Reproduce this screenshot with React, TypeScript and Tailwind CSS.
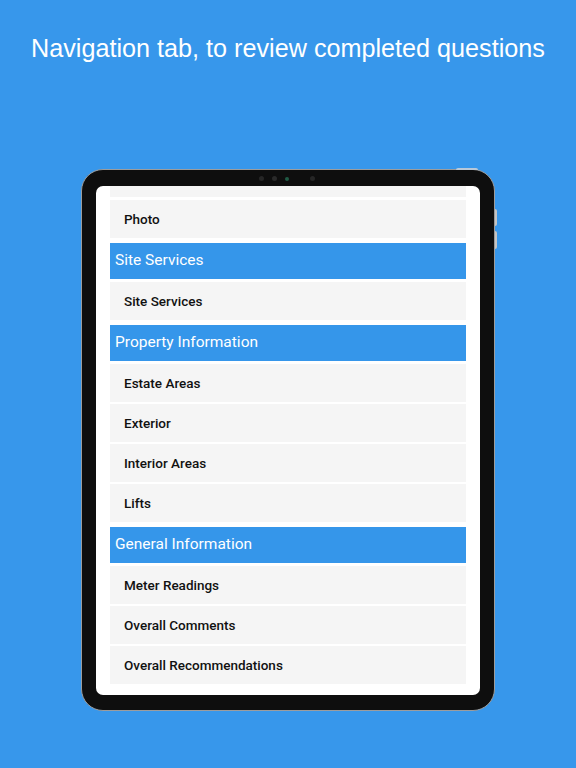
import React from 'react';

type Item = { kind: 'row' | 'header'; label: string };

const items: Item[] = [
  { kind: 'row', label: 'Photo' },
  { kind: 'header', label: 'Site Services' },
  { kind: 'row', label: 'Site Services' },
  { kind: 'header', label: 'Property Information' },
  { kind: 'row', label: 'Estate Areas' },
  { kind: 'row', label: 'Exterior' },
  { kind: 'row', label: 'Interior Areas' },
  { kind: 'row', label: 'Lifts' },
  { kind: 'header', label: 'General Information' },
  { kind: 'row', label: 'Meter Readings' },
  { kind: 'row', label: 'Overall Comments' },
  { kind: 'row', label: 'Overall Recommendations' },
];

function gapClass(prev: Item | undefined, cur: Item) {
  if (!prev) return 'mt-[3px]';
  if (cur.kind === 'header') return 'mt-[5px]';
  if (prev.kind === 'header') return 'mt-[3px]';
  return 'mt-[2px]';
}

export default function App() {
  return (
    <div className="w-[576px] h-[768px] bg-[#3797eb] flex flex-col items-center overflow-hidden">
      <h1 className="pt-[33px] text-[25.2px] leading-[30px] text-white font-['Liberation_Sans',Arial,sans-serif] text-center">
        Navigation tab, to review completed questions
      </h1>

      {/* tablet */}
      <div className="relative mt-[106px] w-[414px] h-[542px] rounded-[22px] bg-[#0e0e0e] border border-[#9c9c9c] pt-[16px] pb-[15px] px-[14px]">
        {/* hardware buttons */}
        <div className="absolute right-[-3px] top-[39px] flex flex-col gap-[5px]">
          <div className="w-[2px] h-[17px] rounded-r bg-[#c4c4c4]" />
          <div className="w-[2px] h-[18px] rounded-r bg-[#c4c4c4]" />
        </div>
        <div className="absolute top-[-2px] left-[374px] w-[22px] h-[2px] rounded-t bg-[#b8c8d8]" />

        {/* camera */}
        <div className="absolute top-[6px] left-[177px] flex items-center gap-[8px]">
          <div className="w-[5px] h-[5px] rounded-full bg-[#262626]" />
          <div className="w-[5px] h-[5px] rounded-full bg-[#2a2a2a]" />
          <div className="w-[4px] h-[4px] rounded-full bg-[#1f5a45]" />
          <div className="ml-[13px] w-[5px] h-[5px] rounded-full bg-[#262626]" />
        </div>

        {/* screen */}
        <div className="w-full h-full bg-white rounded-[7px] overflow-hidden px-[14px] flex flex-col font-['Roboto',sans-serif]">
          <div className="h-[11px] shrink-0 bg-[#f5f5f5]" />
          {items.map((it, i) =>
            it.kind === 'header' ? (
              <div
                key={i}
                className={`${gapClass(items[i - 1], it)} h-[36px] shrink-0 bg-[#3596ea] flex items-center pl-[5px] text-white text-[15.5px]`}
              >
                {it.label}
              </div>
            ) : (
              <div
                key={i}
                className={`${gapClass(items[i - 1], it)} h-[38px] shrink-0 bg-[#f5f5f5] flex items-center pl-[14px] text-[#111] text-[13.5px] font-medium`}
              >
                {it.label}
              </div>
            )
          )}
        </div>
      </div>
    </div>
  );
}
